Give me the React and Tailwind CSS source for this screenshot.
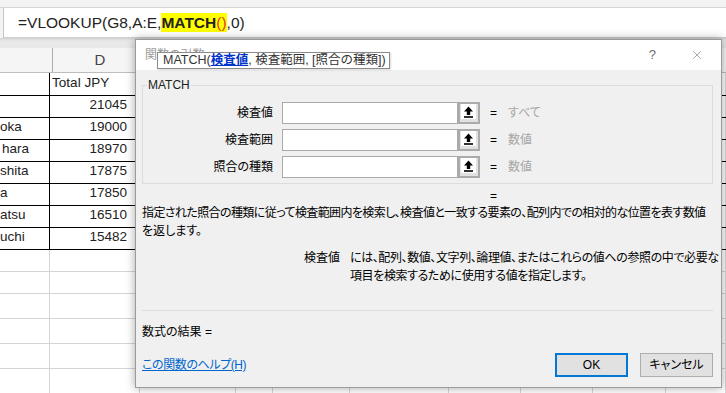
import { X } from 'lucide-react';

const restCols = [96, 37, 77, 99, 72, 72, 73, 60];

const sheetRows = [
  { h: 23, name: '', value: 'Total JPY', left: true, table: true },
  { h: 22, name: '', value: '21045', table: true },
  { h: 22, name: 'oka', value: '19000', table: true },
  { h: 22, name: 'hara', value: '18970', table: true, pad: true },
  { h: 22, name: 'shita', value: '17875', table: true },
  { h: 22, name: 'a', value: '17850', table: true },
  { h: 22, name: 'atsu', value: '16510', table: true },
  { h: 22, name: 'uchi', value: '15482', table: true },
  { h: 22 },
  { h: 22 },
  { h: 25 },
  { h: 25 },
  { h: 25 },
  { h: 25 },
];

const params = [
  { label: '検査値', hint: 'すべて' },
  { label: '検査範囲', hint: '数値' },
  { label: '照合の種類', hint: '数値' },
];

function RefButton() {
  return (
    <div className="flex h-[22px] w-[22px] items-start border-2 border-[#ababab] bg-[#e1e1e1] pl-[1px]">
      <div className="flex h-[15px] w-[15px] items-center justify-center bg-white">
        <svg width="11" height="12" viewBox="0 0 11 12">
          <polygon points="5.5,0.5 1,5.5 3.8,5.5 3.8,9 7.2,9 7.2,5.5 10,5.5" fill="#000" />
          <rect x="1" y="10.2" width="9" height="1.6" fill="#000" />
        </svg>
      </div>
    </div>
  );
}

function SheetRow({ row }) {
  const line = row.table ? 'border-black' : 'border-[#d4d4d4]';
  return (
    <div className={`flex border-b ${line}`} style={{ height: row.h }}>
      <div className={`flex w-[53px] items-end overflow-hidden border-r pb-[2px] ${line} ${row.pad ? 'pl-[2px]' : ''}`}>
        <span className="whitespace-nowrap">{row.name}</span>
      </div>
      <div className={`flex w-[95px] items-end border-r pb-[2px] ${line} ${row.left ? 'justify-start pl-[2px]' : 'justify-end pr-[12px]'}`}>
        <span className="whitespace-nowrap">{row.value}</span>
      </div>
      {restCols.map((w, i) => (
        <div key={i} className="shrink-0 border-r border-[#d4d4d4]" style={{ width: w }} />
      ))}
    </div>
  );
}

function FunctionDialog() {
  return (
    <div className="absolute left-[135px] top-[39px] flex h-[349px] w-[587px] flex-col border border-[#9b9b9b] bg-[#f0f0f0] font-['Liberation_Sans','Noto_Sans_CJK_JP',sans-serif] text-[12px] text-black shadow-[0_0_9px_rgba(0,0,0,0.35)] [font-feature-settings:'palt']">
      <div className="flex h-[30px] items-center justify-between bg-white pl-[9px] pr-[17px]">
        <span className="text-[#9a9a9a]">関数の引数</span>
        <div className="flex items-center gap-[34px] text-[#6b6b6b]">
          <span className="text-[13px]">?</span>
          <X size={14} strokeWidth={1} />
        </div>
      </div>

      {/* argument hint tooltip */}
      <div className="absolute left-[21px] top-[12px] flex h-[17px] w-[233px] items-center border border-[#8a8a8a] bg-white pl-[5px] text-[12.5px] leading-none text-[#333] shadow-[1px_1px_2px_rgba(0,0,0,0.15)] [font-feature-settings:normal]">
        MATCH(<span className="font-bold text-[#0033cc] underline">検査値</span>, 検査範囲, [照合の種類])
      </div>

      <div className="flex flex-1 flex-col pl-[6px] pr-[8px]">
        <fieldset className="mt-[7px] border border-[#dcdcdc] pb-[5px] pt-[9px]">
          <legend className="ml-[4px] px-[1px] leading-[16px] text-[#222]">MATCH</legend>
          <div className="flex flex-col gap-[5px]">
            {params.map((p) => (
              <div key={p.label} className="flex h-[22px] items-center">
                <span className="w-[130px] shrink-0 text-right">{p.label}</span>
                <div className="ml-[9px] h-[22px] w-[176px] border border-[#a9a9a9] bg-white" />
                <RefButton />
                <span className="ml-[10px]">=</span>
                <span className="ml-[11px] text-[#a6a6a6]">{p.hint}</span>
              </div>
            ))}
          </div>
        </fieldset>

        <div className="mt-[4px] h-[16px] pl-[348px] leading-[16px]">=</div>

        <div className="leading-[18px]">
          <div className="whitespace-nowrap tracking-[-0.6px]">
            指定された照合の種類に従って検査範囲内を検索し、検査値と一致する要素の、配列内での相対的な位置を表す数値
          </div>
          <div className="whitespace-nowrap">を返します。</div>
        </div>

        <div className="mt-[9px] flex leading-[18px]">
          <span className="w-[198px] shrink-0 text-right">検査値</span>
          <div className="ml-[10px] tracking-[-0.4px]">
            <div className="whitespace-nowrap">には、配列、数値、文字列、論理値、またはこれらの値への参照の中で必要な</div>
            <div className="whitespace-nowrap">項目を検索するために使用する値を指定します。</div>
          </div>
        </div>

        <div className="mt-[25px] border-t border-[#dcdcdc]" />

        <div className="mt-[13px] h-[16px] leading-[16px]">数式の結果 =</div>

        <div className="mt-[13px] flex h-[24px] items-center">
          <span className="tracking-[-0.4px] text-[#0066cc] underline">この関数のヘルプ(H)</span>
          <div className="ml-auto flex gap-[12px]">
            <button type="button" className="h-[24px] w-[73px] border-2 border-[#0078d7] bg-[#e1e1e1] text-black">
              OK
            </button>
            <button type="button" className="h-[24px] w-[73px] border border-[#adadad] bg-[#e1e1e1] text-black">
              キャンセル
            </button>
          </div>
        </div>
      </div>
    </div>
  );
}

export default function App() {
  return (
    <div className="relative h-[393px] w-[726px] overflow-hidden bg-white">
      <div className="h-[8px] border-b border-[#d6d6d6] bg-[#f3f3f3]" />

      <div className="flex h-[30px] bg-[#f3f3f3]">
        <div className="w-[4px] border-r border-[#c6c6c6]" />
        <div className="flex flex-1 items-center border-b border-[#d0d0d0] bg-white pl-[14px] font-['Liberation_Sans',sans-serif] text-[15.5px] text-[#222]">
          <span>=VLOOKUP(G8,A:E,</span>
          <span className="flex h-[19px] items-center bg-[#ffff00]">
            <span className="font-bold">MATCH</span>
            <span className="text-[#e2401c]">()</span>
          </span>
          <span>,0)</span>
        </div>
      </div>

      <div className="h-[10px] bg-[#e9e9e9] shadow-[inset_0_3px_3px_-2px_rgba(0,0,0,0.12)]" />

      <div className="flex h-[25px] border-b border-[#bdbdbd] bg-[#f5f5f5] font-['Liberation_Sans',sans-serif] text-[15px] text-[#444]">
        <div className="w-[53px] border-r border-[#ababab]" />
        <div className="flex w-[95px] items-center justify-center border-r border-[#ababab]">D</div>
      </div>

      <div className="font-['Liberation_Sans',sans-serif] text-[13.5px] text-[#222]">
        {sheetRows.map((row, i) => (
          <SheetRow key={i} row={row} />
        ))}
      </div>

      <FunctionDialog />
    </div>
  );
}
